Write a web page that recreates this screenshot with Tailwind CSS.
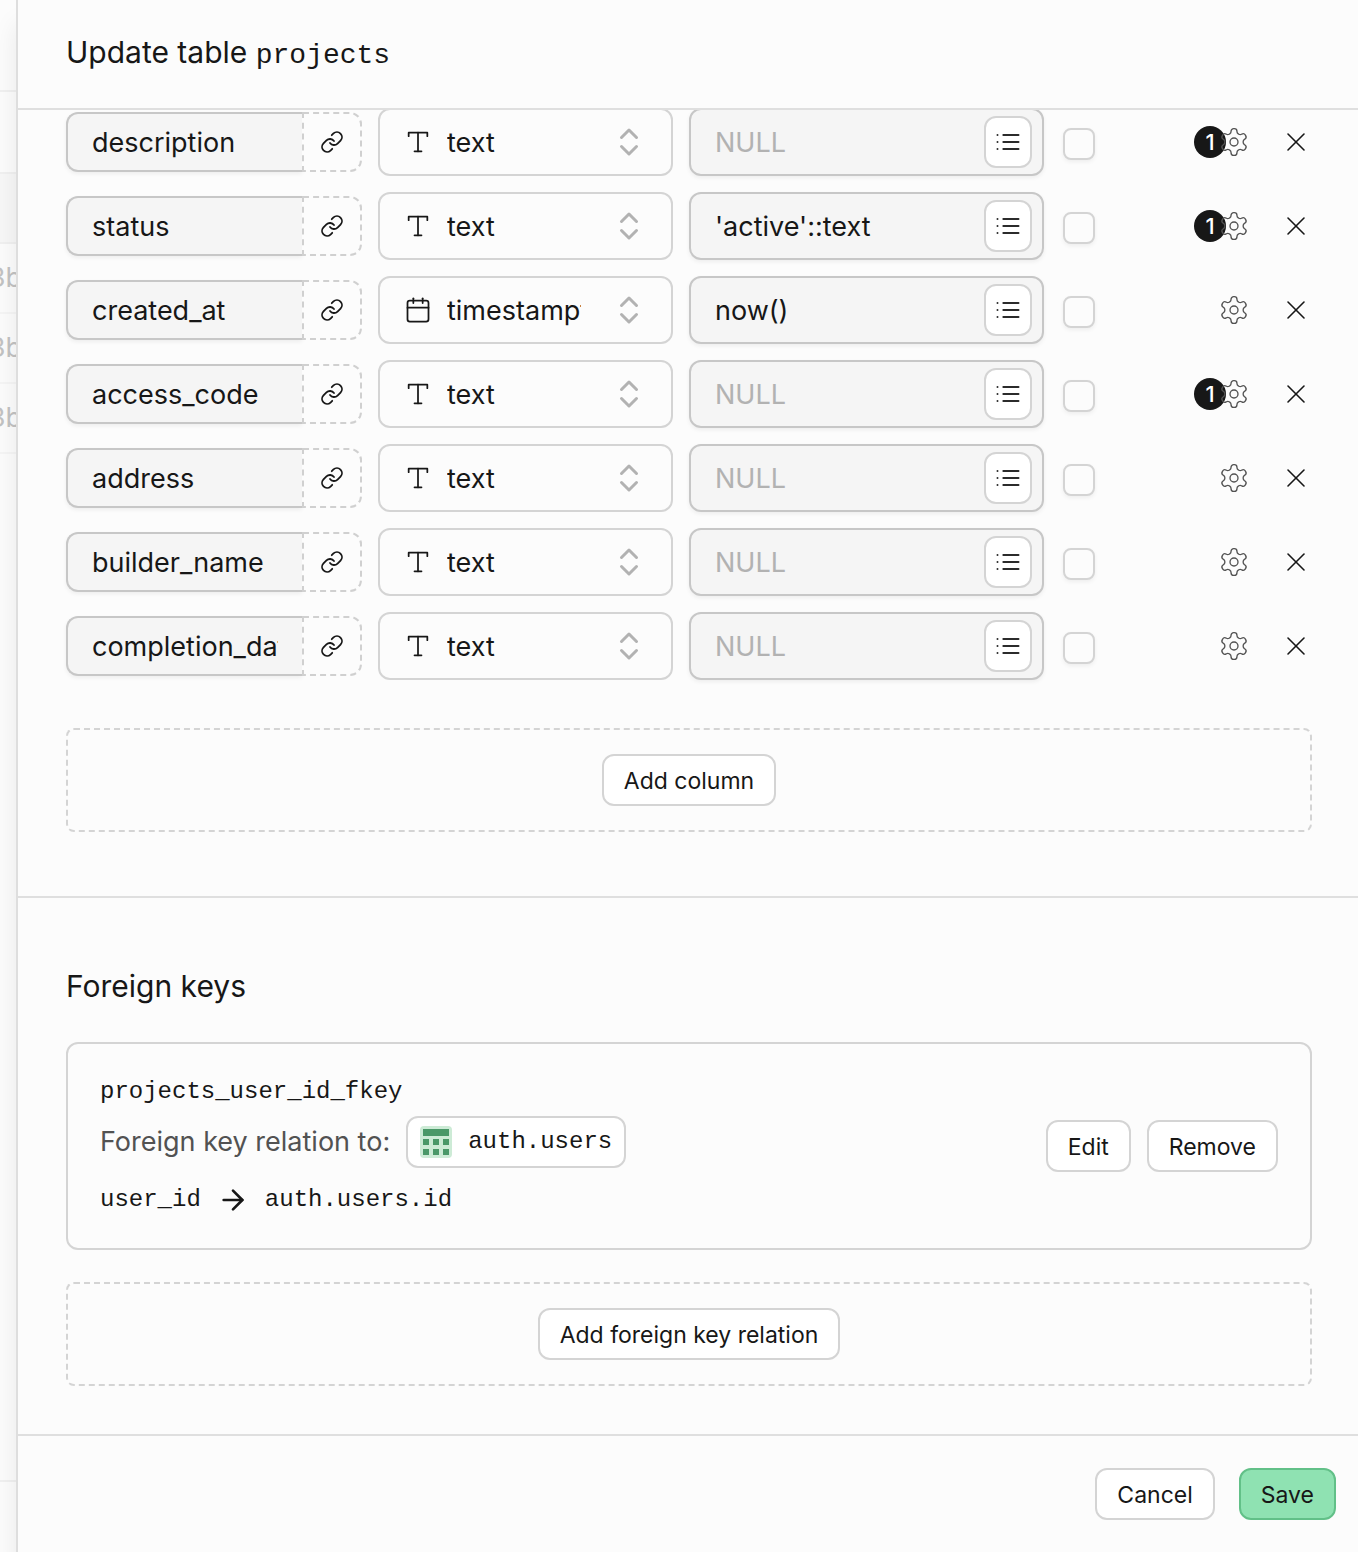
<!DOCTYPE html>
<html lang="en">
<head>
<meta charset="utf-8">
<meta name="viewport" content="width=device-width, initial-scale=1">
<title>Update table projects</title>
<script src="https://cdn.jsdelivr.net/npm/@tailwindcss/browser@4"></script>
</head>
<body class="flex min-h-screen overflow-x-hidden bg-[#fcfcfc] font-['Inter',sans-serif] text-[27px] text-[#171717]">

<!-- Shared icons -->
<svg class="hidden" aria-hidden="true">
  <symbol id="i-link" viewBox="0 0 24 24"><path d="M10 13a5 5 0 0 0 7.54.54l3-3a5 5 0 0 0-7.07-7.07l-1.72 1.71"/><path d="M14 11a5 5 0 0 0-7.54-.54l-3 3a5 5 0 0 0 7.07 7.07l1.71-1.71"/></symbol>
  <symbol id="i-type" viewBox="0 0 24 24"><path d="M4 7V4h16v3"/><path d="M9 20h6"/><path d="M12 4v16"/></symbol>
  <symbol id="i-calendar" viewBox="0 0 24 24"><path d="M8 2v4"/><path d="M16 2v4"/><rect width="18" height="18" x="3" y="4" rx="2"/><path d="M3 10h18"/></symbol>
  <symbol id="i-updown" viewBox="0 0 24 24"><path d="m7 15 5 5 5-5"/><path d="m7 9 5-5 5 5"/></symbol>
  <symbol id="i-list" viewBox="0 0 24 24"><path d="M8 6h13M8 12h13M8 18h13M3 6h.01M3 12h.01M3 18h.01"/></symbol>
  <symbol id="i-gear" viewBox="0 0 24 24"><path d="M12.22 2h-.44a2 2 0 0 0-2 2v.18a2 2 0 0 1-1 1.73l-.43.25a2 2 0 0 1-2 0l-.15-.08a2 2 0 0 0-2.73.73l-.22.38a2 2 0 0 0 .73 2.73l.15.1a2 2 0 0 1 1 1.72v.51a2 2 0 0 1-1 1.74l-.15.09a2 2 0 0 0-.73 2.73l.22.38a2 2 0 0 0 2.73.73l.15-.08a2 2 0 0 1 2 0l.43.25a2 2 0 0 1 1 1.73V20a2 2 0 0 0 2 2h.44a2 2 0 0 0 2-2v-.18a2 2 0 0 1 1-1.73l.43-.25a2 2 0 0 1 2 0l.15.08a2 2 0 0 0 2.73-.73l.22-.39a2 2 0 0 0-.73-2.73l-.15-.08a2 2 0 0 1-1-1.74v-.5a2 2 0 0 1 1-1.74l.15-.09a2 2 0 0 0 .73-2.73l-.22-.38a2 2 0 0 0-2.73-.73l-.15.08a2 2 0 0 1-2 0l-.43-.25a2 2 0 0 1-1-1.73V4a2 2 0 0 0-2-2z"/><circle cx="12" cy="12" r="3"/></symbol>
  <symbol id="i-x" viewBox="0 0 24 24"><path d="M18 6 6 18"/><path d="m6 6 12 12"/></symbol>
</svg>

<!-- Table grid behind the panel -->
<div class="flex w-4 shrink-0 flex-col overflow-hidden text-[#c2c2c2]" aria-hidden="true">
  <div class="h-[92px] shrink-0 border-b-2 border-[#f0f0f0]"></div>
  <div class="h-[82px] shrink-0 border-b-2 border-[#f0f0f0]"></div>
  <div class="h-[70px] shrink-0 border-b-2 border-[#f0f0f0] bg-[#f7f7f7]"></div>
  <div class="-mr-1.5 flex h-[70px] shrink-0 items-center justify-end border-b-2 border-[#f5f5f5]">3b</div>
  <div class="-mr-1.5 flex h-[70px] shrink-0 items-center justify-end border-b-2 border-[#f5f5f5]">3b</div>
  <div class="-mr-1.5 flex h-[70px] shrink-0 items-center justify-end border-b-2 border-[#f5f5f5]">3b</div>
  <div class="flex-1"></div>
  <div class="h-[72px] shrink-0 border-t-2 border-[#f0f0f0]"></div>
</div>

<div role="dialog" aria-labelledby="panel-title" class="flex min-w-0 flex-1 flex-col border-l-2 border-[#dedede] bg-[#fcfcfc] shadow-[0_24px_24px_rgba(0,0,0,0.08)]">

  <header class="relative z-10 flex h-[110px] shrink-0 items-center border-b-2 border-[#dfdfdf] bg-[#fcfcfc] px-12">
    <h1 id="panel-title" class="text-[30px] leading-10">Update table <code class="font-['Liberation_Mono',monospace] text-[28px]">projects</code></h1>
  </header>

  <form class="flex flex-1 flex-col">
    <section class="-mt-0.5 flex flex-col gap-12 border-b-2 border-[#dfdfdf] pr-[46px] pb-16 pl-12">
      <ul id="columns" class="flex flex-col gap-4"></ul>
      <div class="flex justify-center rounded-lg border-2 border-dashed border-[#d4d4d4] py-6">
        <button type="button" class="h-[52px] rounded-xl border-2 border-[#d4d4d4] bg-white px-5 pt-0.5 text-[23px]">Add column</button>
      </div>
    </section>

    <section class="flex flex-1 flex-col gap-8 pt-16 pr-[46px] pb-12 pl-12">
      <h2 class="text-[30px] leading-[48px]">Foreign keys</h2>
      <div class="flex items-center justify-between rounded-xl border-2 border-[#d4d4d4] p-8">
        <div class="flex flex-col font-['Liberation_Mono',monospace] text-2xl">
          <p>projects_user_id_fkey</p>
          <p class="mt-2 flex items-center gap-4">
            <span class="font-['Inter',sans-serif] text-[27px] text-[#525252]">Foreign key relation to:</span>
            <a href="#auth-users" class="flex h-[52px] items-center gap-4 rounded-xl border-2 border-[#d4d4d4] bg-white px-3">
              <svg class="size-8" viewBox="0 0 32 32" aria-hidden="true"><rect width="32" height="32" rx="4" fill="#cdebd6"/><path fill="#4a9868" d="M3 3h26v7H3zM3 13h6v6H3zM13 13h6v6h-6zM23 13h6v6h-6zM3 23h6v6H3zM13 23h6v6h-6zM23 23h6v6h-6z"/></svg>
              auth.users
            </a>
          </p>
          <p class="mt-4 flex items-center gap-4">
            <span>user_id</span>
            <svg class="size-8 fill-none stroke-current stroke-2" stroke-linecap="round" stroke-linejoin="round" viewBox="0 0 24 24" aria-label="references"><path d="M5 12h14"/><path d="m12 5 7 7-7 7"/></svg>
            <span>auth.users.id</span>
          </p>
        </div>
        <div class="flex gap-4 text-[23px]">
          <button type="button" class="h-[52px] rounded-xl border-2 border-[#d4d4d4] bg-white px-5 pt-0.5">Edit</button>
          <button type="button" class="h-[52px] rounded-xl border-2 border-[#d4d4d4] bg-white px-5 pt-0.5">Remove</button>
        </div>
      </div>
      <div class="flex justify-center rounded-lg border-2 border-dashed border-[#d4d4d4] py-6">
        <button type="button" class="h-[52px] rounded-xl border-2 border-[#d4d4d4] bg-white px-5 pt-0.5 text-[23px]">Add foreign key relation</button>
      </div>
    </section>

    <footer class="flex justify-end gap-6 border-t-2 border-[#dfdfdf] py-8 pr-[22px] text-[23px]">
      <button type="button" class="h-[52px] rounded-xl border-2 border-[#d4d4d4] bg-white px-5 pt-0.5">Cancel</button>
      <button type="submit" class="h-[52px] rounded-xl border-2 border-[#62c088] bg-[#8fe2b2] px-5 pt-0.5">Save</button>
    </footer>
  </form>
</div>

<script>
  const columns = [
    { name: 'description', type: 'text', value: '', badge: 1 },
    { name: 'status', type: 'text', value: "'active'::text", badge: 1 },
    { name: 'created_at', type: 'timestamptz', value: 'now()' },
    { name: 'access_code', type: 'text', value: '', badge: 1 },
    { name: 'address', type: 'text', value: '' },
    { name: 'builder_name', type: 'text', value: '' },
    { name: 'completion_date', type: 'text', value: '' },
  ];
  const icon = (id, cls) => `<svg class="shrink-0 fill-none stroke-current ${cls}" stroke-linecap="round" stroke-linejoin="round" aria-hidden="true"><use href="#i-${id}"/></svg>`;

  document.getElementById('columns').innerHTML = columns.map((c) => `
    <li class="grid h-[68px] grid-cols-[296fr_295fr_355fr_252fr] items-center gap-4">
      <div class="flex h-[60px] min-w-0">
        <input aria-label="Column name" value="${c.name}" class="min-w-0 flex-1 rounded-l-xl border-y-2 border-l-2 border-[#c7c7c7] bg-[#f5f5f5] px-6 pt-0.5 shadow-[0_2px_4px_rgba(0,0,0,0.06)]">
        <button type="button" aria-label="Add foreign key for ${c.name}" class="flex w-[60px] shrink-0 items-center justify-center rounded-r-xl border-2 border-dashed border-[#d0d0d0] bg-[#fcfcfc]">${icon('link', 'size-6 stroke-[1.8]')}</button>
      </div>
      <div class="flex h-full min-w-0 items-center rounded-xl border-2 border-[#d4d4d4] px-6">
        ${icon(c.type === 'text' ? 'type' : 'calendar', 'size-7 stroke-[1.5]')}
        <select aria-label="Type of ${c.name}" class="mr-[30px] ml-[15px] w-0 min-w-0 flex-1 appearance-none overflow-hidden bg-transparent pt-0.5"><option>${c.type}</option></select>
        <span class="flex text-[#b2b2b2]">${icon('updown', 'size-9 stroke-2')}</span>
      </div>
      <div class="flex h-full min-w-0 items-center rounded-xl border-2 border-[#c7c7c7] bg-[#f5f5f5] pr-[10px] pl-6 shadow-[0_2px_4px_rgba(0,0,0,0.06)]">
        <input aria-label="Default value of ${c.name}" placeholder="NULL" value="${c.value}" class="min-w-0 flex-1 bg-transparent pt-0.5 placeholder:text-[#b2b2b2]">
        <button type="button" aria-label="Suggested defaults" class="flex h-[52px] w-12 shrink-0 items-center justify-center rounded-xl border-2 border-[#d4d4d4] bg-white text-[#2b2b2b]">${icon('list', 'size-7 stroke-[1.7]')}</button>
      </div>
      <div class="flex items-center pl-[3px]">
        <input type="checkbox" aria-label="${c.name} is primary key" class="mt-1 size-8 appearance-none rounded-lg border-2 border-[#d4d4d4] bg-[#fcfcfc] shadow-[0_2px_4px_rgba(0,0,0,0.06)] checked:bg-[#171717]">
        <div class="relative ml-auto flex">
          ${c.badge ? `<span class="absolute -left-6 flex size-8 items-center justify-center rounded-full bg-[#171717] text-[22px] font-medium text-white">${c.badge}</span>` : ''}
          <button type="button" aria-label="Settings for ${c.name}" class="relative flex text-[#525252]">${icon('gear', 'size-8 stroke-1')}</button>
        </div>
        <button type="button" aria-label="Remove ${c.name}" class="ml-[30px] flex">${icon('x', 'size-8 stroke-[1.2]')}</button>
      </div>
    </li>`).join('');
</script>
</body>
</html>
